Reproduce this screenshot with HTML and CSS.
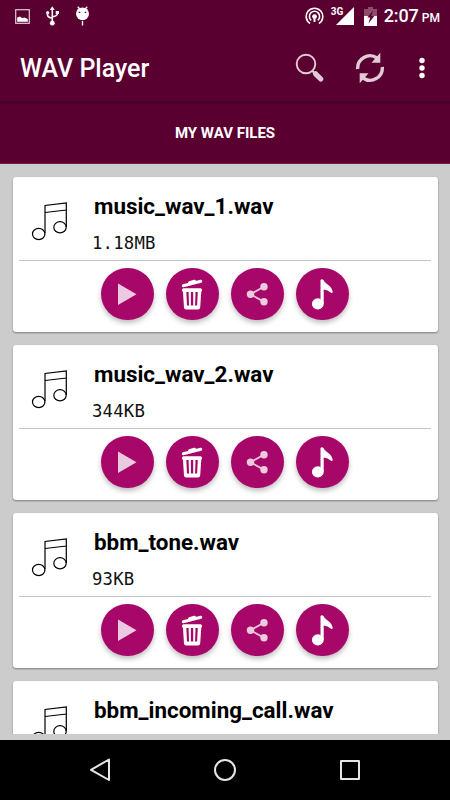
FILE: index.html
```
<!DOCTYPE html>
<html lang="en">
<head>
  <meta charset="UTF-8">
  <title>WAV Player</title>
  <meta name="viewport" content="width=device-width, initial-scale=1.0">
  <link rel="stylesheet" href="styles.css">
</head>
<body>
  <svg class="sprite" xmlns="http://www.w3.org/2000/svg">
    <symbol id="notes" viewBox="0 0 38 40">
      <path d="M14 32V4.500L35.300 2V26M14 11.500L35.300 9" fill="none" stroke="#000" stroke-width="1.200"/>
      <ellipse cx="7.700" cy="33" rx="6.200" ry="5.600" fill="none" stroke="#000" stroke-width="1.200"/>
      <ellipse cx="29" cy="26.300" rx="6.200" ry="5.600" fill="none" stroke="#000" stroke-width="1.200"/>
    </symbol>
    <symbol id="play" viewBox="0 0 52 52">
      <path d="M17 15.500V37L35.500 26.300z" fill="#eccbe0"/>
    </symbol>
    <symbol id="trash" viewBox="0 0 52 52">
      <path d="M17.300 17.800L34.800 13.300M23.500 14.800L28.500 13.200" fill="none" stroke="#fff" stroke-width="3" stroke-linecap="round"/>
      <path d="M17.500 20.200H34.500Q36.300 20.400 36 22.500L35.200 24.500L34.200 39.500Q34 41.500 32 41.500H20.200Q18.200 41.500 18 39.500L17 24.500L16 22.500Q15.800 20.400 17.500 20.200z" fill="#fff"/>
      <path d="M20.300 24H22.600L23 37.500H21zM24.900 24H27.200V37.500H24.900zM29.500 24H31.800L31.100 37.500H29.100z" fill="#a60768"/>
    </symbol>
    <symbol id="share" viewBox="0 0 52 52">
      <path d="M32.800 18.800L19.500 26.200L32.800 33.700" fill="none" stroke="#eccbe0" stroke-width="1.800"/>
      <g fill="#eccbe0">
        <circle cx="33" cy="18.800" r="3.700"/>
        <circle cx="19.500" cy="26.200" r="3.700"/>
        <circle cx="33" cy="33.700" r="3.700"/>
      </g>
    </symbol>
    <symbol id="note" viewBox="0 0 52 52">
      <ellipse cx="21.800" cy="35.900" rx="5.900" ry="5.600" fill="#fff"/>
      <path d="M24.500 35V12Q25.700 10.300 27.500 12C29 16.500 36.500 17.500 36.700 24.300Q36.300 25.500 35 24.800Q32 22 27.700 21.600V35.900z" fill="#fff"/>
    </symbol>
  </svg>

  <div class="status-bar">
    <div class="notifications">
      <svg width="15" height="15" viewBox="0 0 15 15">
        <rect x=".7" y=".7" width="13.600" height="13.600" fill="none" stroke="#dccbd4" stroke-width="1.200"/>
        <path d="M2.200 12.800V8.500L5 7.500L7 9L9.500 8.500L12.800 10V12.800z" fill="#fff"/>
      </svg>
      <svg width="13" height="20" viewBox="0 0 13 20">
        <path d="M6.300 17V3M1.500 6.500V9Q2 11.500 6.300 12.200M11.300 6V8Q11 10 6.300 10.800" fill="none" stroke="#fff" stroke-width="1.600"/>
        <path d="M6.300 .3L8.800 4H3.800z" fill="#fff"/>
        <circle cx="1.700" cy="6.700" r="1.600" fill="#fff"/>
        <path d="M9.700 5H13V8H9.700z" fill="#fff"/>
        <circle cx="6.300" cy="17.200" r="2.400" fill="#fff"/>
      </svg>
      <svg width="15" height="20" viewBox="0 0 15 20">
        <ellipse cx="7.500" cy="7.800" rx="6.500" ry="6.400" fill="#fff"/>
        <path d="M2.800 .7L4.800 3M12.200 .7L10.200 3M7.500 15V19.500" stroke="#fff" stroke-width="1.400"/>
        <path d="M3.800 6.400H5.300M9.700 6.400H11.200" stroke="#5a0031" stroke-width="1.400"/>
      </svg>
    </div>
    <div class="system">
      <svg class="hotspot" width="19" height="19" viewBox="0 0 19 19">
        <g fill="none" stroke="#fff" stroke-width="1.600">
          <path d="M5 16.500A8.300 8.300 0 1 1 14 16.500"/>
          <path d="M6.200 13.300A5.100 5.100 0 1 1 12.800 13.300"/>
        </g>
        <circle cx="9.500" cy="9.600" r="2.400" fill="#fff"/>
        <path d="M8.500 10H10.500V15H8.500z" fill="#fff"/>
      </svg>
      <div class="signal">
        <span class="network">3G</span>
        <svg width="18" height="18" viewBox="0 0 18 18">
          <path d="M18 0V18H0z" fill="#fff"/>
        </svg>
      </div>
      <svg class="battery" width="13" height="19" viewBox="0 0 13 19">
        <path d="M0 2H4V0H9V2H13V9H0z" fill="#8c4c6c"/>
        <path d="M0 9H13V19H0z" fill="#fff"/>
        <path d="M9 3.500L3.300 10.500H6.200L4.500 16.500L10.300 9H7.300z" fill="#5a0031"/>
      </svg>
      <span class="clock">2:07</span><span class="ampm">PM</span>
    </div>
  </div>

  <header class="app-bar">
    <h1>WAV Player</h1>
    <div class="actions">
      <svg width="30" height="30" viewBox="0 0 30 30">
        <circle cx="11" cy="11" r="9.300" fill="none" stroke="#e0cbd6" stroke-width="1.900"/>
        <path d="M17 17.500L20 20.500" stroke="#e0cbd6" stroke-width="2.200"/>
        <path d="M20.500 20.800L25.800 26" stroke="#e0cbd6" stroke-width="5.200" stroke-linecap="round"/>
      </svg>
      <svg width="30" height="32" viewBox="0 0 30 32">
        <path d="M2.700 17A12.300 12.300 0 0 1 22 6M27.300 15A12.300 12.300 0 0 1 8 26" fill="none" stroke="#e0cbd6" stroke-width="3.400"/>
        <path d="M25.300 .8V10.800H16.500zM4.700 31.200V21.200H13.500z" fill="#e0cbd6"/>
      </svg>
      <svg width="6" height="22" viewBox="0 0 6 22">
        <g fill="#fff">
          <circle cx="3" cy="3.500" r="2.700"/>
          <circle cx="3" cy="11" r="2.700"/>
          <circle cx="3" cy="18.500" r="2.700"/>
        </g>
      </svg>
    </div>
  </header>

  <div class="tab">MY WAV FILES</div>

  <main class="file-list">
    <div class="scroll">
      <div class="card">
        <div class="info">
          <svg class="notes"><use href="#notes"/></svg>
          <div>
            <h2>music_wav_1.wav</h2>
            <p>1.18MB</p>
          </div>
        </div>
        <div class="buttons">
          <button><svg><use href="#play"/></svg></button>
          <button><svg><use href="#trash"/></svg></button>
          <button><svg><use href="#share"/></svg></button>
          <button><svg><use href="#note"/></svg></button>
        </div>
      </div>

      <div class="card">
        <div class="info">
          <svg class="notes"><use href="#notes"/></svg>
          <div>
            <h2>music_wav_2.wav</h2>
            <p>344KB</p>
          </div>
        </div>
        <div class="buttons">
          <button><svg><use href="#play"/></svg></button>
          <button><svg><use href="#trash"/></svg></button>
          <button><svg><use href="#share"/></svg></button>
          <button><svg><use href="#note"/></svg></button>
        </div>
      </div>

      <div class="card">
        <div class="info">
          <svg class="notes"><use href="#notes"/></svg>
          <div>
            <h2>bbm_tone.wav</h2>
            <p>93KB</p>
          </div>
        </div>
        <div class="buttons">
          <button><svg><use href="#play"/></svg></button>
          <button><svg><use href="#trash"/></svg></button>
          <button><svg><use href="#share"/></svg></button>
          <button><svg><use href="#note"/></svg></button>
        </div>
      </div>

      <div class="card">
        <div class="info">
          <svg class="notes"><use href="#notes"/></svg>
          <div>
            <h2>bbm_incoming_call.wav</h2>
          </div>
        </div>
      </div>
    </div>
  </main>

  <nav class="nav-bar">
    <svg width="24" height="24" viewBox="0 0 24 24"><path d="M21 1.500V22L3 11.800z"/></svg>
    <svg width="24" height="24" viewBox="0 0 24 24"><circle cx="12" cy="12" r="10"/></svg>
    <svg width="24" height="24" viewBox="0 0 24 24"><rect x="3" y="3" width="18" height="18"/></svg>
  </nav>
</body>
</html>
```
FILE: styles.css
```
* {
  box-sizing: border-box;
}

body {
  margin: 0;
  height: 800px;
  display: flex;
  flex-direction: column;
  overflow: hidden;
  background-color: #cccccc;
  font-family: Roboto, Arial, sans-serif;
  color: #fff;
}

h1, h2, p {
  margin: 0;
}

svg {
  display: block;
}

.sprite {
  display: none;
}

.status-bar {
  height: 32px;
  flex: none;
  padding: 0 10px 0 15px;
  display: flex;
  justify-content: space-between;
  background-color: #5a0031;
}

.notifications {
  display: flex;
  align-items: center;
  gap: 16px;
}

.system {
  display: flex;
  align-items: center;
}

.hotspot {
  margin-right: 7px;
}

.signal {
  display: flex;
  align-items: flex-start;
  margin-right: 10px;
}

.network {
  width: 5px;
  font-size: 10px;
  font-weight: 700;
  line-height: 9px;
  white-space: nowrap;
}

.battery {
  margin-right: 7px;
}

.clock {
  width: 34px;
  font-size: 18px;
  font-weight: 500;
  line-height: 34px;
  letter-spacing: -0.2px;
}

.ampm {
  margin: 4px 0 0 4px;
  font-size: 12px;
  font-weight: 500;
}

.app-bar {
  height: 69px;
  flex: none;
  padding: 2px 25px 0 20px;
  display: flex;
  align-items: center;
  justify-content: space-between;
  background-color: #5a0031;
}

h1 {
  padding-top: 2px;
  font-size: 25px;
  font-weight: 500;
}

.actions {
  display: flex;
  align-items: center;
  gap: 30px;
}

.actions svg:last-child {
  margin-left: 4px;
}

.tab {
  height: 63px;
  flex: none;
  font-size: 15px;
  font-weight: 700;
  line-height: 64px;
  text-align: center;
  background: linear-gradient(#43002a, #5a0031 4px);
  border-bottom: 1px solid #7c1740;
}

.file-list {
  flex: 1;
  min-height: 0;
  padding-bottom: 6px;
}

.scroll {
  height: 100%;
  padding: 13px 12.5px 0;
  overflow: hidden;
}

.card {
  height: 155px;
  margin-bottom: 13px;
  padding: 0 6.5px;
  color: #000;
  background-color: #fff;
  border-radius: 3px;
  box-shadow: 0 1px 2px rgba(0, 0, 0, 0.4);
}

.info {
  height: 84px;
  padding: 16px 0 0 12px;
  display: flex;
  border-bottom: 1px solid #c4c4c4;
}

.card:last-child .info {
  border-bottom: none;
}

.notes {
  width: 38px;
  height: 40px;
  margin: 8px 25px 0 0;
}

h2 {
  font-size: 22.4px;
  font-weight: 700;
  line-height: 26px;
}

.info p {
  margin: 13px 0 0 -2px;
  font-family: "DejaVu Sans Mono", monospace;
  font-size: 17.3px;
  line-height: 22px;
  letter-spacing: 0.2px;
  color: #111;
}

.buttons {
  display: flex;
  gap: 12.6px;
  padding: 7px 0 0 82.3px;
}

button {
  width: 52.4px;
  height: 52.4px;
  padding: 0;
  border: none;
  border-radius: 50%;
  background-color: #a60768;
  box-shadow: 0 3px 5px rgba(0, 0, 0, 0.25);
}

button svg {
  width: 52px;
  height: 52px;
}

.nav-bar {
  height: 60px;
  flex: none;
  display: flex;
  align-items: center;
  justify-content: center;
  gap: 101px;
  background-color: #000;
}

.nav-bar svg {
  fill: none;
  stroke: #e6e6e6;
  stroke-width: 2;
  stroke-linejoin: round;
}
```
